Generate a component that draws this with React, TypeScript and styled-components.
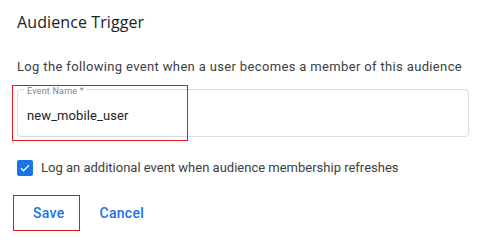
import styled, { createGlobalStyle } from "styled-components";

const GlobalStyle = createGlobalStyle`
  body {
    margin: 0;
    background: #fff;
    font-family: Roboto, "Liberation Sans", sans-serif;
  }
`;

const Panel = styled.div`
  width: 486px;
  height: 242px;
  box-sizing: border-box;
  padding: 10px 17px 0 17px;
  display: flex;
  flex-direction: column;
`;

const Title = styled.h2`
  margin: 0;
  font-family: "Open Sans", Roboto, sans-serif;
  font-size: 16px;
  line-height: 24px;
  font-weight: 400;
  letter-spacing: 0.1px;
  color: #202124;
`;

const Description = styled.p`
  margin: 24px 0 0 0;
  font-size: 13px;
  line-height: 18px;
  letter-spacing: 0.35px;
  color: #3c4043;
`;

const FieldWrap = styled.div`
  position: relative;
  margin-top: 13px;
`;

const Outline = styled.div`
  height: 48px;
  width: 452px;
  box-sizing: border-box;
  padding: 6px 9px 0 9px;
  border: 1px solid #dadce0;
  border-radius: 4px;
  display: flex;
  align-items: center;
`;

const FloatLabel = styled.span`
  position: absolute;
  left: 8px;
  top: -3px;
  padding: 0 2px;
  background: #fff;
  font-size: 9px;
  line-height: 10px;
  letter-spacing: 0.2px;
  color: #80868b;
`;

const Value = styled.span`
  font-size: 13px;
  line-height: 20px;
  letter-spacing: 0.1px;
  color: #202124;
`;

const Highlight = styled.div<{ $w: number; $h: number; $x: number; $y: number }>`
  position: absolute;
  left: ${(p) => p.$x}px;
  top: ${(p) => p.$y}px;
  width: ${(p) => p.$w}px;
  height: ${(p) => p.$h}px;
  box-sizing: border-box;
  border: 1px solid #e0161b;
  pointer-events: none;
`;

const CheckRow = styled.label`
  margin-top: 22px;
  height: 18px;
  display: flex;
  align-items: center;
  gap: 8px;
  font-size: 13px;
  line-height: 18px;
  color: #3c4043;
`;

const Box = styled.span`
  width: 16px;
  height: 16px;
  border-radius: 2px;
  background: #1a73e8;
  display: flex;
  align-items: center;
  justify-content: center;
`;

const Actions = styled.div`
  margin-top: 18px;
  margin-left: -4px;
  display: flex;
`;

const TextButton = styled.button<{ $marked?: boolean }>`
  background: none;
  border: 1px solid ${(p) => (p.$marked ? "#e0161b" : "transparent")};
  height: 36px;
  padding: ${(p) => (p.$marked ? "0 15px 0 19px" : "0 18px")};
  font-family: Roboto, "Liberation Sans", sans-serif;
  font-size: 14px;
  font-weight: 500;
  letter-spacing: 0.3px;
  color: #1a73e8;
  cursor: pointer;
`;

export default function App() {
  return (
    <>
      <GlobalStyle />
      <Panel>
        <Title>Audience Trigger</Title>
        <Description>
          Log the following event when a user becomes a member of this audience
        </Description>
        <FieldWrap>
          <Outline>
            <Value>new_mobile_user</Value>
          </Outline>
          <FloatLabel>Event Name *</FloatLabel>
          <Highlight $x={-5} $y={-4} $w={176} $h={56} />
        </FieldWrap>
        <CheckRow>
          <Box>
            <svg width="12" height="12" viewBox="0 0 24 24">
              <path d="M4 12.5l5 5L20 6.5" fill="none" stroke="#fff" strokeWidth="2.6" />
            </svg>
          </Box>
          Log an additional event when audience membership refreshes
        </CheckRow>
        <Actions>
          <TextButton $marked>Save</TextButton>
          <TextButton>Cancel</TextButton>
        </Actions>
      </Panel>
    </>
  );
}
